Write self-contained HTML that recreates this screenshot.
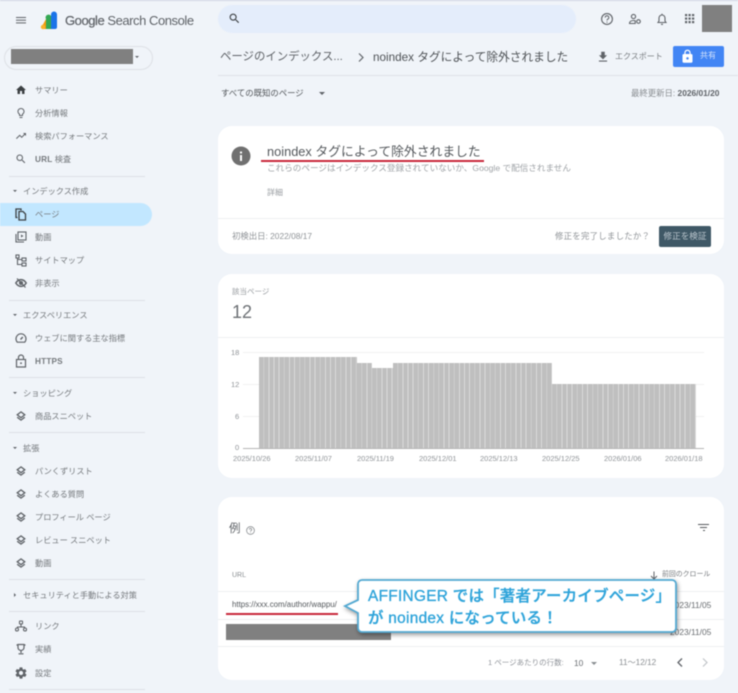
<!DOCTYPE html>
<html lang="ja"><head><meta charset="utf-8"><title>Search Console</title>
<style>
html,body{margin:0;padding:0}
body{width:738px;height:693px;background:#f0f4f9;overflow:hidden;position:relative;font-family:"Liberation Sans","Noto Sans CJK JP",sans-serif;color:#5f6368}
#w{position:absolute;left:0;top:0;width:738px;height:693px;filter:blur(.4px);overflow:hidden}
.t{position:absolute;white-space:nowrap;line-height:1}
.n{font-size:8.2px;left:35px;color:#75797d;margin-top:1px}
.s{font-size:8.2px;left:23px;color:#75797d;margin-top:1px}
.h{position:absolute;left:9px;width:136px;height:1px;background:#dde1e6}
.c{position:absolute;left:218px;width:506px;background:#fff;border-radius:14px}
.l{position:absolute;height:1px;background:#eef0f2}
svg.i{position:absolute;fill:#5f6368}
.a{position:absolute;border-style:solid;border-color:transparent}
.b{position:absolute;bottom:245px;background:repeating-linear-gradient(90deg,#bfbfbf 0,#bfbfbf 4.3px,#dadada 4.3px,#dadada 5.137px)}
.y{font-size:7.5px;color:#8f9397}
.x{font-size:7.5px;color:#8f9397;top:455px}
.ly{position:absolute;left:16px}
</style></head><body><div id="w">
<div style="position:absolute;left:0;top:0;width:738px;height:1px;background:#cfd5e2"></div>
<!-- header -->
<div style="position:absolute;left:16px;top:17px;width:10px;height:1.2px;background:#5f6368;box-shadow:0 2.7px 0 #5f6368,0 5.4px 0 #5f6368"></div>
<svg style="position:absolute;left:40px;top:11px" width="19" height="19" viewBox="0 0 19 19"><path d="M1 17 L6 8 V18 H2.500Z" fill="#f59a0b"/><circle cx="3" cy="16" r="2.200" fill="#f8b12c"/><path d="M6 8a2.500 2.500 0 0 1 5-3v13H6z" fill="#34a853"/><path d="M11 3.500a3 3 0 0 1 6 0V16a2 2 0 0 1-2 2h-4z" fill="#1a73e8"/></svg>
<div class="t" style="left:65px;top:14px;font-size:13px;color:#5f6368;letter-spacing:-.45px"><span style="-webkit-text-stroke:.2px #5f6368">Google</span> Search Console</div>
<div style="position:absolute;left:218px;top:5px;width:358px;height:28px;border-radius:14px;background:#e4edfb"></div>
<svg class="i" style="left:228px;top:12px;fill:#3c4043" width="13" height="13" viewBox="0 0 24 24"><path d="M15.5 14h-.79l-.28-.27C15.41 12.59 16 11.11 16 9.5 16 5.91 13.09 3 9.5 3S3 5.91 3 9.5 5.91 16 9.5 16c1.61 0 3.09-.59 4.23-1.57l.27.28v.79l5 4.99L20.49 19l-4.99-5zm-6 0C7.01 14 5 11.99 5 9.5S7.01 5 9.5 5 14 7.01 14 9.5 11.99 14 9.5 14z"/></svg>
<svg style="position:absolute;left:600px;top:12px" width="14" height="14" viewBox="0 0 14 14" fill="none" stroke="#5f6368"><circle cx="7" cy="7" r="5.4" stroke-width="1.1"/><path d="M5.2 5.6a1.8 1.8 0 1 1 2.7 1.5c-.6.4-.9.7-.9 1.4M7 9.6v1" stroke-width="1"/></svg>
<svg style="position:absolute;left:628px;top:12px" width="14" height="14" viewBox="0 0 14 14" fill="none" stroke="#5f6368" stroke-width="1.1"><circle cx="5.5" cy="4.5" r="2.1"/><path d="M1.5 11.500c0-2 2-3 4-3 .7 0 1.200.1 1.700.3v2.700z"/><circle cx="10.5" cy="9.5" r="1.8"/></svg>
<svg style="position:absolute;left:655px;top:12px" width="14" height="14" viewBox="0 0 14 14" fill="none" stroke="#5f6368" stroke-width="1.1"><path d="M3 10.500h8L10 9V6a3 3 0 0 0-6 0v3zM6 12.300h2M7 1.800v1.200"/></svg>
<svg style="position:absolute;left:685px;top:14px" width="10" height="10" viewBox="0 0 10 10" fill="#5f6368"><rect x="0" y="0" width="2.200" height="2.200"/><rect x="3.500" y="0" width="2.200" height="2.200"/><rect x="7" y="0" width="2.200" height="2.200"/><rect x="0" y="3.500" width="2.200" height="2.200"/><rect x="3.500" y="3.500" width="2.200" height="2.200"/><rect x="7" y="3.500" width="2.200" height="2.200"/><rect x="0" y="7" width="2.200" height="2.200"/><rect x="3.500" y="7" width="2.200" height="2.200"/><rect x="7" y="7" width="2.200" height="2.200"/></svg>
<div style="position:absolute;left:702px;top:5px;width:30px;height:27px;background:#808080"></div>
<!-- property selector -->
<div style="position:absolute;left:4px;top:46px;width:147px;height:22px;border:1px solid #dde0e5;border-radius:12px"></div>
<div style="position:absolute;left:11px;top:49px;width:122px;height:15px;background:#808080"></div>
<div class="a" style="left:135px;top:56px;border-width:2.500px 2.500px 0;border-top-color:#5f6368"></div>
<!-- nav -->
<svg class="i" style="left:15px;top:84px;fill:#3c4043" width="12" height="12" viewBox="0 0 24 24"><path d="M10 20v-6h4v6h5v-8h3L12 3 2 12h3v8z"/></svg>
<div class="t n" style="top:86px">サマリー</div>
<svg class="i" style="left:15px;top:107px" width="12" height="12" viewBox="0 0 24 24"><path d="M9 21c0 .55.45 1 1 1h4c.55 0 1-.45 1-1v-1H9v1zm3-19C8.140 2 5 5.140 5 9c0 2.380 1.190 4.470 3 5.740V17c0 .55.45 1 1 1h6c.55 0 1-.45 1-1v-2.260c1.810-1.270 3-3.360 3-5.740 0-3.860-3.140-7-7-7zm2.850 11.100l-.85.6V16h-4v-2.300l-.85-.6C7.800 12.160 7 10.630 7 9c0-2.760 2.240-5 5-5s5 2.240 5 5c0 1.630-.8 3.160-2.150 4.100z"/></svg>
<div class="t n" style="top:109px">分析情報</div>
<svg class="i" style="left:15px;top:130px" width="12" height="12" viewBox="0 0 24 24"><path d="M16 6l2.290 2.290-4.880 4.880-4-4L2 16.590 3.410 18l6-6 4 4 6.300-6.290L22 12V6z"/></svg>
<div class="t n" style="top:132px">検索パフォーマンス</div>
<svg class="i" style="left:15px;top:153px" width="12" height="12" viewBox="0 0 24 24"><path d="M15.500 14h-.79l-.28-.27C15.410 12.590 16 11.110 16 9.500 16 5.910 13.090 3 9.500 3S3 5.910 3 9.500 5.910 16 9.500 16c1.610 0 3.090-.59 4.230-1.570l.27.28v.79l5 4.990L20.490 19l-4.990-5zm-6 0C7.010 14 5 11.990 5 9.500S7.010 5 9.500 5 14 7.010 14 9.500 11.990 14 9.500 14z"/></svg>
<div class="t n" style="top:155px"><b style="letter-spacing:.2px">URL</b> 検査</div>
<div class="h" style="top:176px"></div>
<div class="a" style="left:13px;top:190px;border-width:2.500px 2px 0;border-top-color:#5f6368"></div>
<div class="t s" style="top:187px">インデックス作成</div>
<div style="position:absolute;left:0;top:203px;width:152px;height:23px;background:#c2e7ff;border-radius:0 12px 12px 0"></div>
<svg style="position:absolute;left:15px;top:208px" width="12" height="13" viewBox="0 0 12 13" fill="none" stroke="#3c4043" stroke-width="1.300"><path d="M2.500 9.500H1V1h5v1.500"/><path d="M4 3.500h4l2.500 2.500v6H4z"/></svg>
<div class="t n" style="top:210px">ページ</div>
<svg style="position:absolute;left:15px;top:231px" width="12" height="12" viewBox="0 0 12 12" fill="none" stroke="#5f6368" stroke-width="1.100"><rect x="3" y="1" width="8" height="8"/><path d="M1 3v8h8"/><path d="M6 3.500l2.500 1.500L6 6.500z" fill="#5f6368" stroke="none"/></svg>
<div class="t n" style="top:233px">動画</div>
<svg style="position:absolute;left:15px;top:254px" width="12" height="13" viewBox="0 0 12 13" fill="none" stroke="#5f6368" stroke-width="1.100"><rect x="1" y="1" width="3" height="3"/><rect x="7" y="4" width="4" height="3"/><rect x="7" y="9" width="4" height="3"/><path d="M2.500 4v6.500H7M2.500 5.500H7"/></svg>
<div class="t n" style="top:256px">サイトマップ</div>
<svg style="position:absolute;left:15px;top:277px" width="12" height="12" viewBox="0 0 12 12" fill="none" stroke="#5f6368" stroke-width="1.500"><path d="M.8 6c2.800-4.500 7.600-4.500 10.400 0-2.800 4.500-7.600 4.500-10.400 0z"/><circle cx="6" cy="6" r="1.300"/><path d="M2 1.500l8.500 9" stroke-width="1.200"/></svg>
<div class="t n" style="top:279px">非表示</div>
<div class="h" style="top:300px"></div>
<div class="a" style="left:13px;top:314px;border-width:2.500px 2px 0;border-top-color:#5f6368"></div>
<div class="t s" style="top:311px">エクスペリエンス</div>
<svg style="position:absolute;left:15px;top:332px" width="12" height="12" viewBox="0 0 12 12" fill="none" stroke="#5f6368" stroke-width="1.200"><path d="M2.300 10.200a5 5 0 1 1 7.400 0z"/><path d="M5.500 7.500l2.300-2.500" stroke-width="1.400"/></svg>
<div class="t n" style="top:334px">ウェブに関する主な指標</div>
<svg style="position:absolute;left:15px;top:354px" width="12" height="14" viewBox="0 0 12 14" fill="none" stroke="#5f6368" stroke-width="1.200"><rect x="1.500" y="5.500" width="9" height="7.500"/><path d="M3.500 5.500V3.500a2.500 2.500 0 0 1 5 0v2"/><circle cx="6" cy="9.200" r=".9" fill="#5f6368" stroke="none"/></svg>
<div class="t n" style="top:357px;font-weight:bold;letter-spacing:.2px">HTTPS</div>
<div class="h" style="top:377px"></div>
<div class="a" style="left:13px;top:392px;border-width:2.500px 2px 0;border-top-color:#5f6368"></div>
<div class="t s" style="top:389px">ショッピング</div>
<svg class="ly" style="top:411px" width="10" height="10" viewBox="0 0 10 10" fill="none" stroke="#5f6368" stroke-width="1.300"><path d="M5 .9L8.800 3.800 5 6.700 1.200 3.800zM1.200 6.200L5 9.100 8.800 6.200"/></svg>
<div class="t n" style="top:412px">商品スニペット</div>
<div class="h" style="top:432px"></div>
<div class="a" style="left:13px;top:447px;border-width:2.500px 2px 0;border-top-color:#5f6368"></div>
<div class="t s" style="top:444px">拡張</div>
<svg class="ly" style="top:466px" width="10" height="10" viewBox="0 0 10 10" fill="none" stroke="#5f6368" stroke-width="1.300"><path d="M5 .9L8.800 3.800 5 6.700 1.200 3.800zM1.200 6.200L5 9.100 8.800 6.200"/></svg>
<div class="t n" style="top:467px">パンくずリスト</div>
<svg class="ly" style="top:489px" width="10" height="10" viewBox="0 0 10 10" fill="none" stroke="#5f6368" stroke-width="1.300"><path d="M5 .9L8.800 3.800 5 6.700 1.200 3.800zM1.200 6.200L5 9.100 8.800 6.200"/></svg>
<div class="t n" style="top:490px">よくある質問</div>
<svg class="ly" style="top:512px" width="10" height="10" viewBox="0 0 10 10" fill="none" stroke="#5f6368" stroke-width="1.300"><path d="M5 .9L8.800 3.800 5 6.700 1.200 3.800zM1.200 6.200L5 9.100 8.800 6.200"/></svg>
<div class="t n" style="top:513px">プロフィール ページ</div>
<svg class="ly" style="top:535px" width="10" height="10" viewBox="0 0 10 10" fill="none" stroke="#5f6368" stroke-width="1.300"><path d="M5 .9L8.800 3.800 5 6.700 1.200 3.800zM1.200 6.200L5 9.100 8.800 6.200"/></svg>
<div class="t n" style="top:536px">レビュー スニペット</div>
<svg class="ly" style="top:558px" width="10" height="10" viewBox="0 0 10 10" fill="none" stroke="#5f6368" stroke-width="1.300"><path d="M5 .9L8.800 3.800 5 6.700 1.200 3.800zM1.200 6.200L5 9.100 8.800 6.200"/></svg>
<div class="t n" style="top:559px">動画</div>
<div class="h" style="top:579px"></div>
<div class="a" style="left:14px;top:593px;border-width:2px 0 2px 2.500px;border-left-color:#5f6368"></div>
<div class="t s" style="top:591px">セキュリティと手動による対策</div>
<div class="h" style="top:611px"></div>
<svg style="position:absolute;left:15px;top:620px" width="12" height="12" viewBox="0 0 12 12" fill="none" stroke="#5f6368" stroke-width="1.100"><rect x="4.500" y="1" width="3" height="3" rx=".5"/><circle cx="2" cy="9.500" r="1.500"/><circle cx="10" cy="9.500" r="1.500"/><path d="M6 4v3M2.500 8V7h7v1"/></svg>
<div class="t n" style="top:622px">リンク</div>
<svg style="position:absolute;left:15px;top:643px" width="12" height="12" viewBox="0 0 12 12" fill="none" stroke="#5f6368" stroke-width="1.200"><path d="M3 1.500h6v3a3 3 0 0 1-6 0zM1.500 2H3M9 2h1.500M6 7.500V10M3.500 10.800h5"/></svg>
<div class="t n" style="top:645px">実績</div>
<svg class="i" style="left:14px;top:666px" width="14" height="14" viewBox="0 0 24 24" fill-rule="evenodd"><path d="M19.140 12.940c.04-.3.06-.61.06-.94 0-.32-.02-.64-.07-.94l2.030-1.580c.18-.14.23-.41.12-.61l-1.920-3.320c-.12-.22-.37-.29-.59-.22l-2.390.96c-.5-.38-1.030-.7-1.620-.94l-.36-2.540c-.04-.24-.24-.41-.48-.41h-3.840c-.24 0-.43.17-.47.41l-.36 2.540c-.59.24-1.130.57-1.620.94l-2.390-.96c-.22-.08-.47 0-.59.22L2.740 8.870c-.12.21-.08.47.12.61l2.030 1.580c-.05.3-.09.63-.09.94s.02.64.07.94l-2.030 1.580c-.18.14-.23.41-.12.61l1.920 3.320c.12.22.37.29.59.22l2.390-.96c.5.38 1.030.7 1.620.94l.36 2.540c.05.24.24.41.48.41h3.840c.24 0 .44-.17.47-.41l.36-2.540c.59-.24 1.130-.56 1.620-.94l2.390.96c.22.08.47 0 .59-.22l1.920-3.320c.12-.22.07-.47-.12-.61l-2.010-1.580zM12 15.600c-1.980 0-3.600-1.620-3.600-3.600s1.620-3.600 3.600-3.600 3.600 1.620 3.600 3.600-1.620 3.600-3.600 3.600z"/></svg>
<div class="t n" style="top:669px">設定</div>
<div class="h" style="top:689px"></div>
<!-- page header -->
<div class="t" style="left:220px;top:51.500px;font-size:11.400px;color:#5f6368">ページのインデックス...</div>
<svg style="position:absolute;left:357px;top:52px" width="8" height="11" viewBox="0 0 8 11" fill="none" stroke="#5f6368" stroke-width="1.200"><path d="M2 1.500l4 4-4 4"/></svg>
<div class="t" style="left:373px;top:51.500px;font-size:11.700px;color:#4f5357">noindex タグによって除外されました</div>
<svg class="i" style="left:596px;top:50px" width="14" height="14" viewBox="0 0 24 24"><path d="M19 9h-4V3H9v6H5l7 7 7-7zM5 18v2h14v-2H5z"/></svg>
<div class="t" style="left:615px;top:52.500px;font-size:8px;color:#7b7f83">エクスポート</div>
<div style="position:absolute;left:673px;top:46px;width:51px;height:21px;background:#4285f4;border-radius:2px"></div>
<svg class="i" style="left:680px;top:49px;fill:#fff" width="15" height="15" viewBox="0 0 24 24"><path d="M18 8h-1V6c0-2.760-2.240-5-5-5S7 3.240 7 6v2H6c-1.100 0-2 .9-2 2v10c0 1.100.9 2 2 2h12c1.100 0 2-.9 2-2V10c0-1.100-.9-2-2-2zm-6 9c-1.100 0-2-.9-2-2s.9-2 2-2 2 .9 2 2-.9 2-2 2zm3.100-9H8.900V6c0-1.710 1.390-3.100 3.100-3.100 1.710 0 3.100 1.390 3.100 3.100v2z"/></svg>
<div class="t" style="left:700px;top:52px;font-size:8px;color:#d4e3fc">共有</div>
<div style="position:absolute;left:218px;top:75px;width:520px;height:1px;background:#dfe3e8"></div>
<div class="t" style="left:221px;top:89px;font-size:8.400px;color:#55595d">すべての既知のページ</div>
<div class="a" style="left:319px;top:92px;border-width:3px 3.500px 0;border-top-color:#5f6368"></div>
<div class="t" style="left:631px;top:88.500px;font-size:8.400px;color:#8a8e92">最終更新日: <span style="color:#5f6368;font-weight:bold">2026/01/20</span></div>
<!-- card 1 -->
<div class="c" style="top:126px;height:128px"></div>
<svg style="position:absolute;left:231px;top:146px" width="20" height="20" viewBox="0 0 20 20"><circle cx="10" cy="10" r="9.500" fill="#707070"/><rect x="9" y="9" width="2" height="6" fill="#fff"/><rect x="9" y="5.500" width="2" height="2" fill="#fff"/></svg>
<div class="t" style="left:267px;top:145.500px;font-size:12.800px;color:#55595d">noindex タグによって除外されました</div>
<div style="position:absolute;left:261px;top:160px;width:223px;height:2px;background:#c8283c"></div>
<div class="t" style="left:267px;top:164px;font-size:8.600px;color:#a0a4a8">これらのページはインデックス登録されていないか、Google で配信されません</div>
<div class="t" style="left:267px;top:189px;font-size:8px;color:#9a9ea2">詳細</div>
<div class="l" style="left:218px;top:218px;width:506px"></div>
<div class="t" style="left:232px;top:232px;font-size:8.400px;color:#909498">初検出日: 2022/08/17</div>
<div class="t" style="left:555px;top:232px;font-size:8.400px;color:#909498;letter-spacing:.28px">修正を完了しましたか？</div>
<div style="position:absolute;left:659px;top:226px;width:52px;height:21px;background:#3f5866;border-radius:2px"></div>
<div class="t" style="left:663.500px;top:232px;font-size:8.600px;color:#b9c4cc">修正を検証</div>
<!-- card 2 -->
<div class="c" style="top:274px;height:204px"></div>
<div class="t" style="left:232px;top:288px;font-size:7.500px;color:#9a9ea2">該当ページ</div>
<div class="t" style="left:232px;top:303px;font-size:18px;color:#6e7276">12</div>
<div class="l" style="left:218px;top:337px;width:506px"></div>
<div class="l" style="left:243px;top:352px;width:461px;background:#f1f1f1"></div>
<div class="l" style="left:243px;top:384px;width:461px;background:#f1f1f1"></div>
<div class="l" style="left:243px;top:416px;width:461px;background:#f1f1f1"></div>
<div class="t y" style="left:231px;top:349px">18</div>
<div class="t y" style="left:231px;top:381px">12</div>
<div class="t y" style="left:235px;top:413px">6</div>
<div class="t y" style="left:235px;top:444px">0</div>
<div class="b" style="left:259.300px;width:97.600px;height:90.700px"></div>
<div class="b" style="left:356.900px;width:15.400px;height:85.300px"></div>
<div class="b" style="left:372.300px;width:20.600px;height:80px"></div>
<div class="b" style="left:392.900px;width:159.100px;height:85.300px"></div>
<div class="b" style="left:552px;width:144px;height:64px"></div>
<div style="position:absolute;left:243px;top:448px;width:461px;height:1px;background:#b5b5b5"></div>
<div class="t x" style="left:233px">2025/10/26</div>
<div class="t x" style="left:295px">2025/11/07</div>
<div class="t x" style="left:357px">2025/11/19</div>
<div class="t x" style="left:419px">2025/12/01</div>
<div class="t x" style="left:480px">2025/12/13</div>
<div class="t x" style="left:542px">2025/12/25</div>
<div class="t x" style="left:604px">2026/01/06</div>
<div class="t x" style="left:665px">2026/01/18</div>
<!-- card 3 -->
<div class="c" style="top:497px;height:183px"></div>
<div class="t" style="left:229px;top:523.500px;font-size:11.500px;color:#5f6368">例</div>
<svg style="position:absolute;left:246px;top:526px" width="9" height="9" viewBox="0 0 9 9" fill="none" stroke="#7a7e82" stroke-width=".7"><circle cx="4.500" cy="4.500" r="3.900"/><path d="M3.300 3.600a1.200 1.200 0 1 1 1.800 1c-.4.3-.6.4-.6.9M4.500 6.300v.6"/></svg>
<div style="position:absolute;left:698px;top:524px;width:11px;height:1.300px;background:#55595d"></div>
<div style="position:absolute;left:700px;top:527px;width:7px;height:1.300px;background:#55595d"></div>
<div style="position:absolute;left:702.500px;top:530px;width:2.500px;height:1.300px;background:#55595d"></div>
<div class="t" style="left:232px;top:572px;font-size:7px;color:#8a8e92">URL</div>
<svg style="position:absolute;left:650px;top:571px" width="8" height="9" viewBox="0 0 8 9" fill="none" stroke="#5f6368" stroke-width="1"><path d="M4 .5V8M1 5l3 3 3-3"/></svg>
<div class="t" style="left:662px;top:571.500px;font-size:6.900px;color:#74787c">前回のクロール</div>
<div class="l" style="left:218px;top:591px;width:506px"></div>
<div class="l" style="left:218px;top:619px;width:506px"></div>
<div class="l" style="left:218px;top:646px;width:506px"></div>
<div class="t" style="left:232px;top:601px;font-size:7.900px;color:#55595d">https://xxx.com/author/wappu/</div>
<div style="position:absolute;left:226px;top:613px;width:112px;height:2px;background:#c8283c"></div>
<div style="position:absolute;left:226px;top:624px;width:165px;height:16px;background:#808080"></div>
<div class="t" style="left:670px;top:600.500px;font-size:8.400px;color:#6a6e72">2023/11/05</div>
<div class="t" style="left:670px;top:628px;font-size:8.400px;color:#6a6e72">2023/11/05</div>
<div class="t" style="left:488px;top:659px;font-size:7.500px;color:#90949a">1 ページあたりの行数:</div>
<div class="t" style="left:574px;top:658.500px;font-size:8.400px;color:#6a6e72">10</div>
<div class="a" style="left:591px;top:662px;border-width:3px 3.500px 0;border-top-color:#8a8e92"></div>
<div class="t" style="left:619px;top:658.500px;font-size:8.200px;color:#8a8e92">11〜12/12</div>
<svg style="position:absolute;left:676px;top:657px" width="8" height="11" viewBox="0 0 8 11" fill="none" stroke="#5f6368" stroke-width="1.300"><path d="M6 1.500l-4 4 4 4"/></svg>
<svg style="position:absolute;left:701px;top:657px" width="8" height="11" viewBox="0 0 8 11" fill="none" stroke="#c0c4c8" stroke-width="1.200"><path d="M2 1.500l4 4-4 4"/></svg>
<!-- callout -->
<svg style="position:absolute;left:340px;top:575px;filter:drop-shadow(1px 2px 2px rgba(0,0,0,.4))" width="340" height="64" viewBox="0 0 340 64"><path d="M18 9a4 4 0 0 1 4-4h310a4 4 0 0 1 4 4v44a4 4 0 0 1-4 4H22a4 4 0 0 1-4-4V38L5 31l13-6z" fill="#fff" stroke="#53a9d2" stroke-width="1.800"/></svg>
<div class="t" style="left:368px;top:589px;font-size:15.400px;font-weight:500;letter-spacing:.3px;-webkit-text-stroke:.35px #2fa4da;color:#2fa4da">AFFINGER では「著者アーカイブページ」</div>
<div class="t" style="left:368px;top:611px;font-size:15.400px;font-weight:500;letter-spacing:.3px;-webkit-text-stroke:.35px #2fa4da;color:#2fa4da">が noindex になっている！</div>
</div></body></html>
